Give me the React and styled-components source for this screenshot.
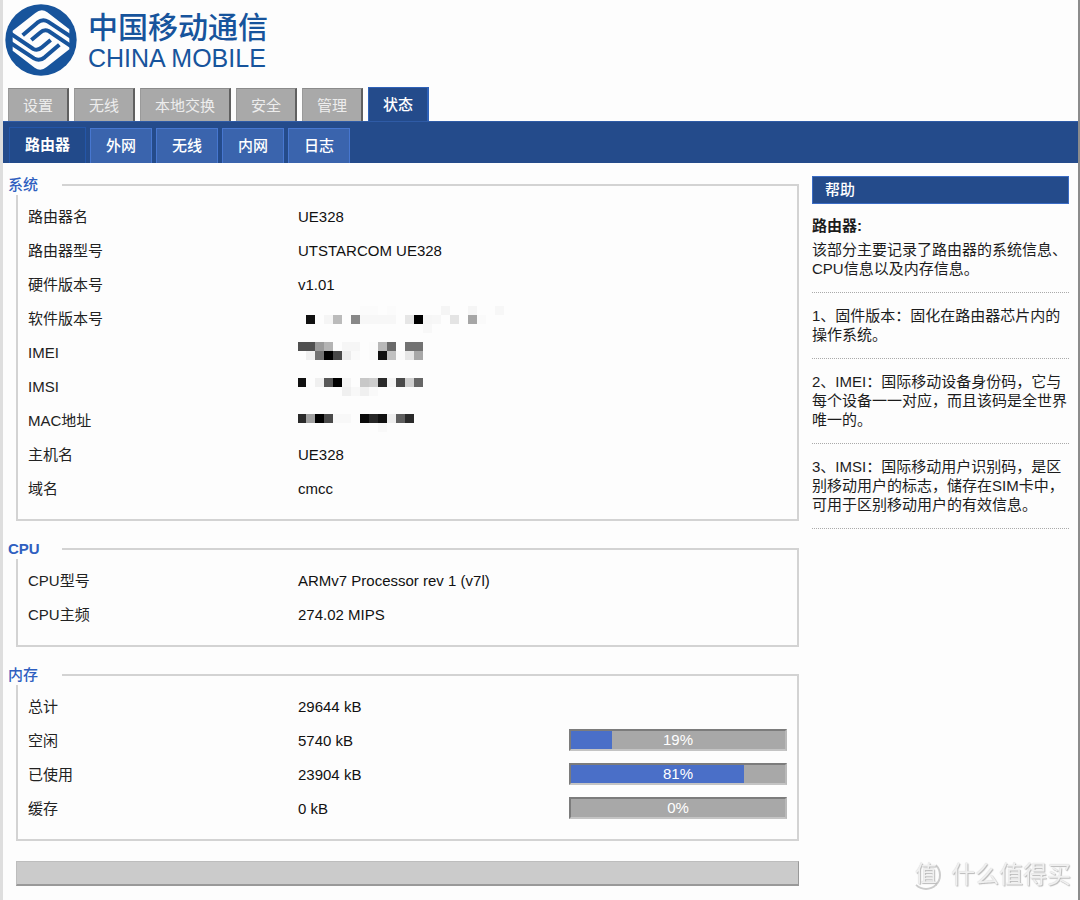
import styled, { createGlobalStyle } from "styled-components";

const GlobalStyle = createGlobalStyle`
  *, *::before, *::after {
    box-sizing: border-box;
  }

  body {
    margin: 0;
    color: #222;
    background-color: #fdfdfd;
    font-family: "Liberation Sans", "Noto Sans CJK SC", sans-serif;
    font-size: 15px;
    line-height: 19px;
  }
`;

const Page = styled.div`
  min-height: 100vh;
  border-left: 3px solid #dedede;
  border-right: 2px solid #8c8c8c;
  border-bottom: 1px solid #dcdcdc;
`;

const Brand = styled.header`
  display: flex;
  align-items: center;
  gap: 11px;
  height: 87px;
  padding: 0 2px 7px;
  color: #17549c;
`;

const Wordmark = styled.div`
  padding-top: 4px;
  font-size: 25px;
  line-height: 28px;
`;

const BrandName = styled.div`
  font-size: 30px;
  font-weight: 500;
  line-height: 32px;
`;

const Tabs = styled.nav`
  display: flex;
  align-items: flex-end;
  gap: 5px;
  height: 34px;
  padding: 0 5px;
`;

const Tab = styled.a`
  height: ${(props) => (props.$active ? 34 : 33)}px;
  padding: 0 14px;
  border-style: solid;
  border-width: 1px 2px 0 1px;
  border-color: ${(props) =>
    props.$active ? "#2f62b8" : "#8b8b8b #606060 #8b8b8b #9a9a9a"};
  color: ${(props) => (props.$active ? "#fff" : "#ededed")};
  background-color: ${(props) => (props.$active ? "#244b8b" : "#a9a9a9")};
  font-weight: ${(props) => (props.$active ? 500 : 400)};
  line-height: 33px;
  text-decoration: none;
`;

const SubTabs = styled.nav`
  display: flex;
  align-items: flex-end;
  gap: 4px;
  height: 42px;
  padding: 0 6px;
  border-top: 1px solid #2f5ba6;
  background-color: #244b8b;
`;

const SubTab = styled.a`
  height: ${(props) => (props.$active ? 36 : 35)}px;
  padding: 0 15px;
  border: 1px solid ${(props) => (props.$active ? "#2456a8" : "#4777d0")};
  border-bottom: 0;
  color: #fff;
  background-color: ${(props) => (props.$active ? "#224a8a" : "#3a64ad")};
  font-weight: ${(props) => (props.$active ? 700 : 500)};
  line-height: 34px;
  text-decoration: none;
`;

const Body = styled.div`
  display: flex;
  align-items: flex-start;
  gap: 13px;
  padding: 12px 9px 14px 13px;
`;

const Main = styled.main`
  flex: 1;
  min-width: 0;
`;

const Section = styled.fieldset`
  min-width: 0;
  margin: 0 0 18px;
  padding: 4px 10px 14px;
  border: 2px solid #d3d3d3;
`;

const Legend = styled.legend`
  min-width: 54px;
  height: 20px;
  margin-left: -20px;
  padding: 0;
  color: #2f5fc0;
  background-color: #fdfdfd;
  font-weight: ${(props) => (props.$bold ? 700 : 500)};
  line-height: 20px;
`;

const Table = styled.table`
  width: 100%;
  border-collapse: collapse;
  table-layout: fixed;
`;

const Name = styled.th`
  width: 270px;
  height: 34px;
  padding: 0;
  font-weight: 400;
  text-align: left;
`;

const Value = styled.td`
  height: 34px;
  padding: 0;
  color: #111;
`;

const BarCell = styled.td`
  width: 218px;
  padding: 0;
`;

const Bar = styled.div`
  position: relative;
  height: 22px;
  border: 2px solid;
  border-color: #7c7c7c #b9b9b9 #c4c4c4 #7c7c7c;
  color: #fff;
  background-color: #a8a8a8;
  line-height: 18px;
  text-align: center;
`;

const Fill = styled.div`
  position: absolute;
  top: 0;
  bottom: 0;
  left: 0;
  background-color: #4a6fc8;
`;

const Percent = styled.span`
  position: relative;
`;

const Mask = styled.svg`
  display: block;
`;

const Footer = styled.div`
  height: 25px;
  margin-top: 20px;
  border: 1px solid #bdbdbd;
  border-right-color: #999;
  border-bottom: 2px solid #999;
  background-color: #cbcbcb;
`;

const Help = styled.aside`
  width: 257px;
  padding-top: 1px;
  color: #1c1c1c;
`;

const HelpTitle = styled.h2`
  margin: 0 0 12px;
  padding: 0 12px;
  border: 1px solid #3b6cc4;
  color: #fff;
  background-color: #244b8b;
  font-size: 15px;
  font-weight: 500;
  line-height: 26px;
`;

const HelpTopic = styled.h3`
  margin: 0 0 5px;
  font-size: 15px;
  line-height: 19px;
`;

const HelpText = styled.p`
  margin: 0;
  padding: ${(props) => (props.$first ? 0 : 13)}px 0 14px;
  border-bottom: 1px dotted #aaa;
`;

const Watermark = styled.div`
  position: fixed;
  right: 9px;
  bottom: 9px;
  display: flex;
  align-items: center;
  gap: 10px;
  color: #f0f0f0;
  font-size: 24px;
  line-height: 32px;
  text-shadow: 1px 1px 1px #b8b8b8, 0 0 1px #c8c8c8;
`;

const Badge = styled.span`
  width: 30px;
  height: 30px;
  border: 2px solid transparent;
  border-right-color: #ccc;
  border-bottom-color: #ccc;
  border-radius: 50%;
  font-size: 22px;
  line-height: 24px;
  text-align: center;
`;

const tabs = ["设置", "无线", "本地交换", "安全", "管理", "状态"];
const subTabs = ["路由器", "外网", "无线", "内网", "日志"];

// Masked values: [column, y, grey level], each tile is 9px
const masks = {
  software: [
    [7, 5, 251], [8, 5, 251], [10, 5, 251], [16, 5, 245], [19, 5, 245],
    [22, 5, 247], [1, 14, 17], [3, 14, 245], [4, 14, 187], [6, 14, 136],
    [7, 14, 247], [8, 14, 247], [9, 14, 247], [10, 14, 247], [12, 14, 230],
    [13, 14, 0], [14, 14, 246], [15, 14, 247], [17, 14, 228], [19, 14, 166],
    [20, 14, 250], [14, 23, 248],
  ],
  imei: [
    [0, 7, 80], [1, 7, 80], [2, 7, 154], [3, 7, 180], [5, 7, 246],
    [6, 7, 246], [8, 7, 251], [9, 7, 184], [10, 7, 106], [12, 7, 114],
    [13, 7, 114], [1, 16, 240], [2, 16, 114], [3, 16, 0], [4, 16, 72],
    [5, 16, 236], [6, 16, 250], [8, 16, 251], [9, 16, 17], [10, 16, 192],
    [11, 16, 250], [12, 16, 230], [13, 16, 168],
  ],
  imsi: [
    [0, 9, 17], [2, 9, 240], [3, 9, 88], [4, 9, 0], [5, 9, 244],
    [7, 9, 200], [8, 9, 205], [9, 9, 42], [10, 9, 244], [11, 9, 74],
    [12, 9, 207], [13, 9, 102], [5, 18, 240], [6, 18, 248], [7, 18, 240],
    [8, 18, 249],
  ],
  mac: [
    [0, 11, 42], [1, 11, 160], [2, 11, 0], [3, 11, 74], [4, 11, 248],
    [5, 11, 248], [7, 11, 10], [8, 11, 38], [9, 11, 17], [10, 11, 238],
    [11, 11, 94], [12, 11, 42], [9, 20, 249],
  ],
};

const system = [
  { name: "路由器名", value: "UE328" },
  { name: "路由器型号", value: "UTSTARCOM UE328" },
  { name: "硬件版本号", value: "v1.01" },
  { name: "软件版本号", mask: masks.software },
  { name: "IMEI", mask: masks.imei },
  { name: "IMSI", mask: masks.imsi },
  { name: "MAC地址", mask: masks.mac },
  { name: "主机名", value: "UE328" },
  { name: "域名", value: "cmcc" },
];

const cpu = [
  { name: "CPU型号", value: "ARMv7 Processor rev 1 (v7l)" },
  { name: "CPU主频", value: "274.02 MIPS" },
];

const memory = [
  { name: "总计", value: "29644 kB" },
  { name: "空闲", value: "5740 kB", percent: 19 },
  { name: "已使用", value: "23904 kB", percent: 81 },
  { name: "缓存", value: "0 kB", percent: 0 },
];

const help = [
  "该部分主要记录了路由器的系统信息、CPU信息以及内存信息。",
  "1、固件版本：固化在路由器芯片内的操作系统。",
  "2、IMEI：国际移动设备身份码，它与每个设备一一对应，而且该码是全世界唯一的。",
  "3、IMSI：国际移动用户识别码，是区别移动用户的标志，储存在SIM卡中，可用于区别移动用户的有效信息。",
];

function Emblem() {
  return (
    <svg width="72" height="72" viewBox="15 12 216 216" aria-hidden="true">
      <circle cx="123" cy="120" r="107" fill="#17549c" />
      <path
        d="M38 92 L106 39 Q124 24 142 37 L208 88 V148 L140 201 Q122 216 104 203 L38 152 Z"
        fill="#fdfdfd"
      />
      <g fill="none" stroke="#17549c" strokeWidth="12">
        <path d="M68 106 L112 68 Q128 55 144 65 L214 111" />
        <path d="M94 120 L120 98 Q132 87 146 93 L214 139" />
        <path d="M178 134 L134 172 Q118 185 102 175 L32 129" />
        <path d="M152 120 L126 142 Q114 153 100 147 L32 101" />
      </g>
    </svg>
  );
}

function MaskedValue({ tiles }) {
  return (
    <Mask width="216" height="34" shapeRendering="crispEdges" aria-hidden="true">
      {tiles.map(([col, y, level]) => (
        <rect
          key={`${col}-${y}`}
          x={col * 9 - 1}
          y={y}
          width="9"
          height="9"
          fill={`rgb(${level}, ${level}, ${level})`}
        />
      ))}
    </Mask>
  );
}

function Usage({ label, percent }) {
  return (
    <Bar
      role="progressbar"
      aria-label={label}
      aria-valuenow={percent}
      aria-valuemin={0}
      aria-valuemax={100}
    >
      <Fill style={{ width: `${percent}%` }} />
      <Percent>{percent}%</Percent>
    </Bar>
  );
}

function InfoSection({ title, rows, bold }) {
  const hasBars = rows.some((row) => row.percent !== undefined);

  return (
    <Section>
      <Legend $bold={bold}>{title}</Legend>
      <Table>
        <tbody>
          {rows.map((row) => (
            <tr key={row.name}>
              <Name scope="row">{row.name}</Name>
              <Value>
                {row.mask ? <MaskedValue tiles={row.mask} /> : row.value}
              </Value>
              {hasBars && (
                <BarCell>
                  {row.percent !== undefined && (
                    <Usage label={row.name} percent={row.percent} />
                  )}
                </BarCell>
              )}
            </tr>
          ))}
        </tbody>
      </Table>
    </Section>
  );
}

function App() {
  return (
    <>
      <GlobalStyle />
      <Page>
        <Brand>
          <Emblem />
          <Wordmark>
            <BrandName>中国移动通信</BrandName>
            CHINA MOBILE
          </Wordmark>
        </Brand>

        <Tabs>
          {tabs.map((tab) => (
            <Tab key={tab} href="#" $active={tab === "状态"}>
              {tab}
            </Tab>
          ))}
        </Tabs>
        <SubTabs>
          {subTabs.map((tab) => (
            <SubTab key={tab} href="#" $active={tab === "路由器"}>
              {tab}
            </SubTab>
          ))}
        </SubTabs>

        <Body>
          <Main>
            <InfoSection title="系统" rows={system} />
            <InfoSection title="CPU" rows={cpu} bold />
            <InfoSection title="内存" rows={memory} />
            <Footer />
          </Main>

          <Help>
            <HelpTitle>帮助</HelpTitle>
            <HelpTopic>路由器:</HelpTopic>
            {help.map((text, i) => (
              <HelpText key={text} $first={i === 0}>
                {text}
              </HelpText>
            ))}
          </Help>
        </Body>

        <Watermark>
          <Badge>值</Badge>
          什么值得买
        </Watermark>
      </Page>
    </>
  );
}

export default App;
